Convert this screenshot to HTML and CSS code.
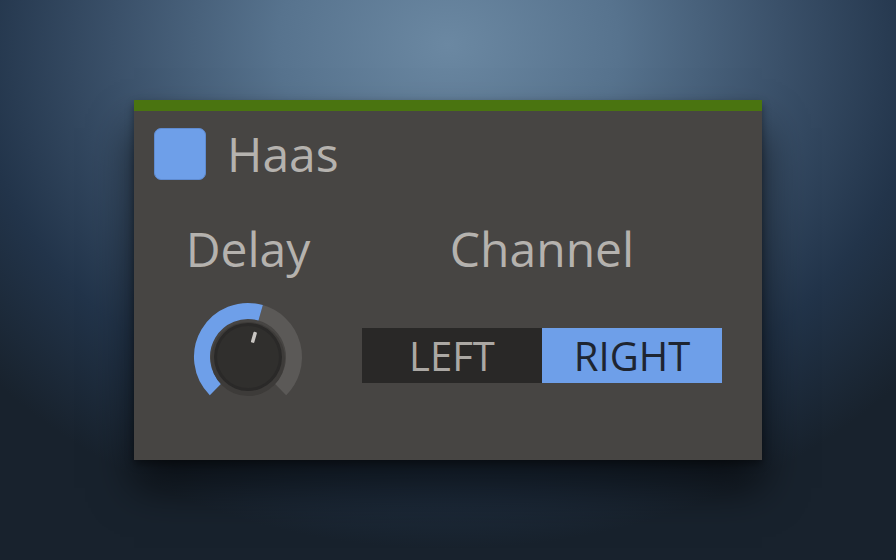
FILE: index.html
```html
<!DOCTYPE html>
<html lang="en">
<head>
    <meta charset="UTF-8">
    <meta name="viewport" content="width=device-width, initial-scale=1.0">
    <title>Haas</title>
    <link rel="stylesheet" href="styles.css">
</head>
<body>
    <div class="plugin">
        <div class="plugin-header">
            <div class="enable-box"></div>
            <div class="plugin-title">Haas</div>
        </div>

        <div class="params">
            <div class="param-label">Delay</div>
            <div class="param-label">Channel</div>

            <div class="knob">
                <svg width="120" height="120" viewBox="0 0 120 120">
                    <!-- track -->
                    <path d="M72.68 15.78 A46 46 0 0 1 92.53 92.53" class="knob-rest" />
                    <path d="M27.47 92.53 A46 46 0 0 1 72.68 15.78" class="knob-value" />
                    <!-- cap -->
                    <circle cx="60" cy="62" r="37" fill="#3d3b39" />
                    <circle cx="60" cy="60" r="34" fill="#2a2928" />
                    <circle cx="60" cy="60" r="31" fill="#302f2d" />
                    <rect x="58.5" y="34" width="3.5" height="11" rx="1" fill="#c9c6c2" transform="rotate(16 60 60)" />
                </svg>
            </div>

            <div class="segmented">
                <div class="segment">LEFT</div>
                <div class="segment active">RIGHT</div>
            </div>
        </div>
    </div>
</body>
</html>
```

FILE: styles.css
```css
:root {
    --panel-bg: #474543;
    --accent: #6e9fe9;
    --label: #b5b2ae;
    --header-green: #4a7410;
}

* {
    margin: 0;
    padding: 0;
    box-sizing: border-box;
}

body {
    width: 896px;
    height: 560px;
    overflow: hidden;
    font-family: "Open Sans", "Noto Sans", sans-serif;
    background: radial-gradient(ellipse 68% 90% at 50% 8%, #6b88a2 0%, #57738e 28%, #3a5069 55%, #22344a 78%, #18222d 100%);
    display: flex;
    justify-content: center;
    align-items: flex-start;
}

.plugin {
    margin-top: 100px;
    width: 628px;
    height: 360px;
    background: var(--panel-bg);
    border-top: 11px solid var(--header-green);
    box-shadow: 0 28px 40px rgba(0, 0, 0, 0.6), 0 4px 8px rgba(0, 0, 0, 0.4);
}

.plugin-header {
    display: flex;
    align-items: center;
    gap: 21px;
    padding: 17px 20px 0;
}

.enable-box {
    width: 52px;
    height: 52px;
    border-radius: 7px;
    background: var(--accent);
    border: 1px solid #5f8bd0;
}

.plugin-title {
    font-size: 48px;
    line-height: 52px;
    color: var(--label);
}

.params {
    display: grid;
    grid-template-columns: 228px 360px;
    grid-template-rows: 52px 120px;
    row-gap: 22px;
    justify-items: center;
    align-items: center;
    margin-top: 43px;
}

.param-label {
    font-size: 48px;
    line-height: 52px;
    color: var(--label);
}

.knob svg {
    display: block;
}

.knob-value,
.knob-rest {
    fill: none;
    stroke-width: 16;
}

.knob-value {
    stroke: var(--accent);
}

.knob-rest {
    stroke: #5b5957;
}

.segmented {
    display: flex;
    width: 360px;
    height: 55px;
    margin-top: -4px;
}

.segment {
    flex: 1;
    display: flex;
    align-items: center;
    justify-content: center;
    font-size: 40px;
    background: #292827;
    color: #aba8a4;
}

.segment.active {
    background: var(--accent);
    color: #1e2531;
}
```
